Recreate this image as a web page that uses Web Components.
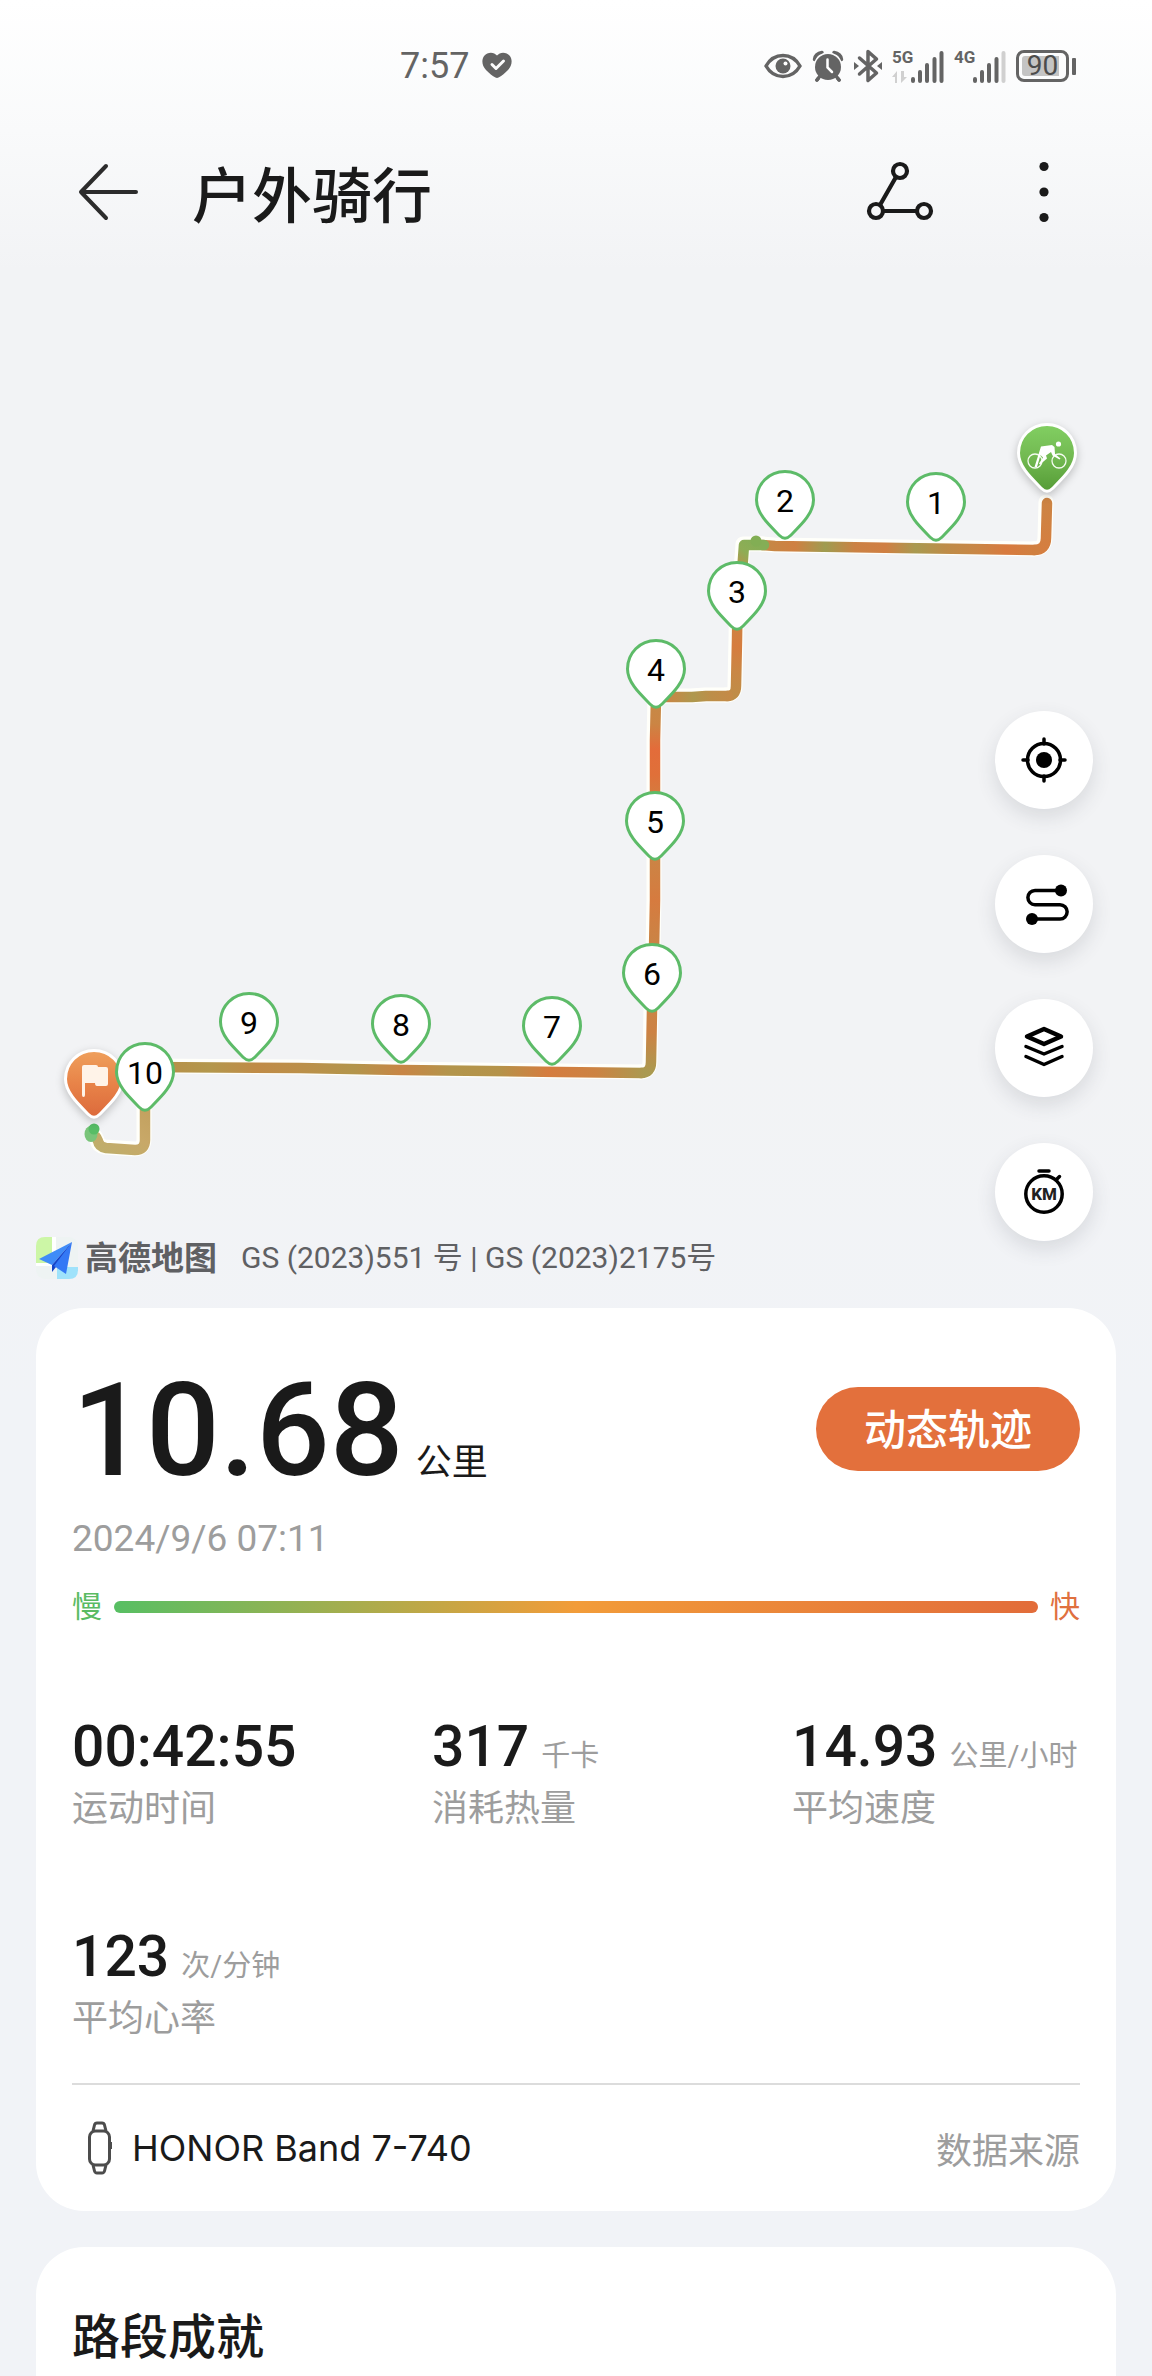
<!DOCTYPE html>
<html lang="zh-CN">
<head>
<meta charset="utf-8">
<meta name="viewport" content="width=device-width, initial-scale=1">
<title>户外骑行</title>
<style>
  html { background: #f1f3f7; }
  body {
    margin: 0;
    font-family: Roboto, "Noto Sans CJK SC", sans-serif;
    color: #1a1a1a;
    background: linear-gradient(#ffffff 0, #f9fafb 130px, #f2f3f5 270px, #f2f3f5 1060px, #f1f3f7 1400px);
  }
</style>
</head>
<body>
<ride-page>
  <status-bar slot="top"></status-bar>
  <title-bar slot="top">户外骑行</title-bar>
  <track-map slot="top">
    <map-pin x="936" y="472">1</map-pin>
    <map-pin x="785" y="470">2</map-pin>
    <map-pin x="737" y="561">3</map-pin>
    <map-pin x="656" y="639">4</map-pin>
    <map-pin x="655" y="791">5</map-pin>
    <map-pin x="652" y="943">6</map-pin>
    <map-pin x="552" y="996">7</map-pin>
    <map-pin x="401" y="994">8</map-pin>
    <map-pin x="249" y="992">9</map-pin>
    <map-pin x="94" y="1049" kind="finish"></map-pin>
    <map-pin x="145" y="1042">10</map-pin>
    <map-pin x="1047" y="423" kind="start"></map-pin>
    <map-tool slot="tools" name="locate" label="定位"></map-tool>
    <map-tool slot="tools" name="route" label="轨迹"></map-tool>
    <map-tool slot="tools" name="layers" label="图层"></map-tool>
    <map-tool slot="tools" name="km" label="公里点"></map-tool>
  </track-map>
  <summary-card>
    <span slot="distance">10.68</span>
    <span slot="unit">公里</span>
    <span slot="action">动态轨迹</span>
    <span slot="date">2024/9/6 07:11</span>
    <stat-item label="运动时间">00:42:55</stat-item>
    <stat-item label="消耗热量" unit="千卡">317</stat-item>
    <stat-item label="平均速度" unit="公里/小时">14.93</stat-item>
    <stat-item label="平均心率" unit="次/分钟">123</stat-item>
    <device-row slot="footer" source="数据来源">HONOR Band 7-740</device-row>
  </summary-card>
  <section-card heading="路段成就"></section-card>
</ride-page>

<script>
const define = (name, render, setup) => customElements.define(name, class extends HTMLElement {
  connectedCallback() {
    if (this.shadowRoot) return;
    this.attachShadow({ mode: 'open' }).innerHTML = render(this);
    if (setup) setup(this);
  }
});

define('ride-page', () => `
  <style>
    :host { display: block; height: 100vh; overflow: hidden; }
    main { display: flex; flex-direction: column; gap: 36px; padding: 0 36px; }
  </style>
  <slot name="top"></slot>
  <main><slot></slot></main>`);

define('status-bar', () => `
  <style>
    :host { display: flex; align-items: center; justify-content: space-between; height: 132px; padding: 0 76px 0 400px; box-sizing: border-box; color: #646464; }
    div { display: flex; align-items: center; }
    .time { gap: 13px; font-size: 36px; line-height: 40px; }
    .icons { gap: 10px; }
    svg { display: block; flex: none; }
    .net { display: flex; align-items: flex-start; }
    .net b { font-size: 17px; line-height: 17px; }
    .net .tag { flex-direction: column; align-items: flex-start; gap: 5px; height: 34px; width: 19px; }
    .bat { gap: 3px; }
    .cell { box-sizing: border-box; width: 53px; height: 32px; border: 3px solid #646464; border-radius: 8px; padding: 3px; }
    .cell span { flex: 1; height: 20px; border-radius: 3px; background: linear-gradient(90deg, #c4c4c4 90%, transparent 90%); font-size: 28px; line-height: 20px; text-align: center; color: #4c4c4c; }
    .tip { width: 4px; height: 17px; border-radius: 1px; background: #646464; }
  </style>
  <div class="time"><span>7:57</span>
    <svg width="30" height="28" viewBox="0 0 30 28"><path fill="currentColor" d="M15 3.600C12-.4 5.500-.2 2.300 3.800-1 8 .2 14 4 18c3 3.200 6.700 6 9.500 7.500 1 .6 2 .6 3 0C19.300 24 23 21.200 26 18c3.800-4 5-10 1.700-14.200C24.500-.2 18-.4 15 3.600z"/><path d="M10 12.500l4 4 7.500-7.500" fill="none" stroke="#fcfcfd" stroke-width="3" stroke-linecap="round" stroke-linejoin="round"/></svg>
  </div>
  <div class="icons">
    <svg width="38" height="26" viewBox="0 0 38 26"><path d="M2 13C10-1 28-1 36 13 28 27 10 27 2 13z" fill="none" stroke="currentColor" stroke-width="3.500" stroke-linejoin="round"/><circle cx="19" cy="13" r="7.500" fill="currentColor"/><circle cx="21.500" cy="10.500" r="2" fill="#fff"/></svg>
    <svg width="32" height="32" viewBox="0 0 32 32"><g fill="none" stroke="currentColor" stroke-linecap="round"><path d="M2.500 9.500C3 5.500 6 3 10 2.500M29.500 9.500C29 5.500 26 3 22 2.500" stroke-width="3.500"/><path d="M8 26l-3 4M24 26l3 4" stroke-width="3.500"/></g><circle cx="16" cy="17" r="14.500" fill="#fcfcfd"/><path d="M8 26l-3 4M24 26l3 4" stroke="currentColor" stroke-width="3.500" stroke-linecap="round"/><circle cx="16" cy="17" r="13" fill="currentColor"/><path d="M15.500 9.500v8l4.500 4.500" fill="none" stroke="#fff" stroke-width="2.500" stroke-linecap="round"/></svg>
    <svg width="28" height="34" viewBox="0 0 28 34"><path d="M5.500 9l17 15-8.500 7.500v-29L22.500 10l-17 15" fill="none" stroke="currentColor" stroke-width="3.500" stroke-linejoin="round" stroke-linecap="round"/><path d="M0 13l5 4-5 4zM28 13l-5 4 5 4z" fill="currentColor"/></svg>
    <div class="net"><div class="tag"><b>5G</b><svg width="16" height="12" viewBox="0 0 16 12"><path d="M5 12V0L0 6h3v6zM9 0v12l6-6h-3V0z" fill="#d0d0d0"/></svg></div>
      <svg width="33" height="34" viewBox="0 0 33 34"><path d="M2 30v2M9 23v9M16 16v16M23.500 10v22M30.500 4v28" stroke="currentColor" stroke-width="4" stroke-linecap="round"/></svg></div>
    <div class="net"><div class="tag"><b>4G</b></div>
      <svg width="33" height="34" viewBox="0 0 33 34"><path d="M2 30v2M9 23v9M16 16v16M23.500 10v22" stroke="currentColor" stroke-width="4" stroke-linecap="round"/><path d="M30.500 4v28" stroke="#d0d0d0" stroke-width="4" stroke-linecap="round"/></svg></div>
    <div class="bat"><div class="cell"><span>90</span></div><div class="tip"></div></div>
  </div>`);

define('title-bar', () => `
  <style>
    :host { display: flex; align-items: center; height: 120px; padding: 0 72px; }
    h1 { flex: 1; margin: 0 0 0 46px; font: 500 60px/80px "Noto Sans CJK SC", sans-serif; }
    button { display: block; padding: 0; border: 0; background: none; color: #1a1a1a; }
    svg { display: block; }
    .more { margin-left: 72px; }
  </style>
  <button aria-label="返回"><svg width="74" height="72" viewBox="0 0 74 72"><path d="M34 10L9 36l25 26M9 36h55" fill="none" stroke="#2c2c2c" stroke-width="4" stroke-linejoin="round" stroke-linecap="round"/></svg></button>
  <h1><slot></slot></h1>
  <button aria-label="轨迹详情"><svg width="72" height="72" viewBox="0 0 72 72"><g fill="none" stroke="currentColor" stroke-width="4.200"><circle cx="36" cy="15" r="7"/><circle cx="12" cy="55" r="7"/><circle cx="60" cy="55" r="7"/><path d="M32 21L16 49M19 55h34"/></g></svg></button>
  <button class="more" aria-label="更多"><svg width="72" height="72" viewBox="0 0 72 72" fill="currentColor"><circle cx="36" cy="10.500" r="4.600"/><circle cx="36" cy="36" r="4.600"/><circle cx="36" cy="61.500" r="4.600"/></svg></button>`);

/* The canvas is 1152 x 1056 units, with its origin 252 units below the page's top. */
const MAP_W = 1152, MAP_H = 1056, MAP_TOP = 252;

const LEGS = [
  { from: [1047, 500], to: [1047, 550], d: 'M1047 503L1046 538Q1046 550 1034 550', stops: ['#cc8444', '#d57e40'] },
  { from: [1036, 550], to: [765, 546], d: 'M1035 550L970 549 900 548 840 547 775 546 762 545', stops: ['#d08040', '#d87a3e', '#c98745', '#be8c48', '#a99a50', '#d07f42', '#cb8144', '#9f9c50', '#cf8042', '#c58846'] },
  { from: [762, 545], to: [743, 570], d: 'M764 545H744L742 572', stops: ['#84ae56', '#8ead55', '#b5944b'] },
  { from: [738, 620], to: [732, 698], d: 'M738 572L737 640 736 686Q736 696 727 696', stops: ['#cc8444', '#d67c3f', '#c98745', '#be8d48'] },
  { from: [730, 696], to: [656, 698], d: 'M728 696L706 696 692 697H656', stops: ['#c48a47', '#bd8e49', '#ae984e', '#c38a47', '#cf8042'] },
  { from: [656, 698], to: [655, 800], d: 'M656 698L655 740 655 800', stops: ['#c58a47', '#cb8544', '#e36c3a', '#e07039', '#d27d40'] },
  { from: [655, 800], to: [652, 950], d: 'M655 800L655 900 654 950', stops: ['#c88646', '#c98646', '#d67b3f', '#c88546'] },
  { from: [652, 950], to: [652, 1073], d: 'M653 950L652 1010 651 1062Q651 1073 641 1073', stops: ['#c98646', '#c98646', '#cd8244', '#aa9a50'] },
  { from: [645, 1073], to: [160, 1067], d: 'M642 1073L560 1072 401 1070 300 1068 145 1067', stops: ['#aa9a50', '#cc8343', '#d57c3f', '#b59349', '#b3954b', '#c88545', '#b3954b', '#bb9049', '#c08b47', '#b3974c', '#b88f48'] },
  { from: [145, 1067], to: [95, 1148], d: 'M145 1067V1140Q145 1150 135 1150L106 1148Q99 1147 98 1141L96 1137', stops: ['#bb9250', '#c2a05e', '#c8a868', '#bfae6b'] }
];

define('track-map', () => {
  const grads = LEGS.map((leg, i) => `<linearGradient id="g${i}" gradientUnits="userSpaceOnUse" x1="${leg.from[0]}" y1="${leg.from[1]}" x2="${leg.to[0]}" y2="${leg.to[1]}">${
    leg.stops.map((c, k) => `<stop offset="${k / (leg.stops.length - 1)}" stop-color="${c}"/>`).join('')}</linearGradient>`).join('');
  const halo = LEGS.map(leg => `<path d="${leg.d}"/>`).join('');
  const line = LEGS.map((leg, i) => `<path d="${leg.d}" stroke="url(#g${i})"/>`).join('');
  return `
  <style>
    :host { display: block; position: relative; aspect-ratio: ${MAP_W} / ${MAP_H}; }
    .route { display: block; width: 100%; height: 100%; }
    .tools { position: absolute; top: 459px; right: 59px; display: flex; flex-direction: column; gap: 46px; }
    .credit { position: absolute; left: 36px; bottom: 28px; display: flex; align-items: center; color: #5f6063; font-size: 30px; line-height: 44px; }
    .credit svg { display: block; margin-right: 7px; }
    .credit b { font: 700 33px/40px "Noto Sans CJK SC", sans-serif; padding-bottom: 4px; margin-right: 24px; }
  </style>
  <svg class="route" viewBox="0 ${MAP_TOP} ${MAP_W} ${MAP_H}" aria-hidden="true">
    <defs>${grads}</defs>
    <g fill="none" stroke-linecap="round" stroke-linejoin="round">
      <g stroke="#fffffa" stroke-width="15" transform="translate(-1 -1)">${halo}</g>
      <g stroke-width="10.500">${line}</g>
    </g>
    <circle cx="756" cy="541" r="5.500" fill="#82ae54"/>
    <ellipse cx="91" cy="1134" rx="6.500" ry="8" fill="#79c47a"/><circle cx="94" cy="1129" r="5.500" fill="#57bd66"/>
  </svg>
  <slot></slot>
  <div class="tools"><slot name="tools"></slot></div>
  <div class="credit">
    <svg width="42" height="42" viewBox="0 0 42 42"><rect width="42" height="42" rx="9" fill="#eef3f3"/><path d="M0 26V9Q0 0 9 0h7v26z" fill="#ccf6a6"/><path d="M21 42V30h21v3q0 9-9 9z" fill="#9fe2fb"/><path d="M16 0h4v25h-4zM0 26h17v3H0z" fill="#fff"/><path d="M36 5L3 22l13 6z" fill="#3f8cf8"/><path d="M36 5L16 28v7l4-5z" fill="#1544c8"/><path d="M36 5L18 29l12 8z" fill="#3478f5"/></svg>
    <b>高德地图</b><span>GS (2023)551 号 | GS (2023)2175号</span>
  </div>`;
});

const PIN = 'M31 1.500C15 1.500 2.500 14 2.500 30c0 13.500 12.500 25 23 35.500 3.500 3.500 7.500 3.500 11 0C47 55 59.500 43.500 59.500 30 59.500 14 47 1.500 31 1.500z';
define('map-pin', el => {
  const kind = el.getAttribute('kind');
  const art = kind === 'start'
    ? '<g fill="none" stroke="#f4fbf0" stroke-width="1.300"><circle cx="19" cy="38" r="7"/><circle cx="43" cy="38" r="7"/></g><path d="M25 23.500l11-1.500 2.500 2 .5 7 5.500 4.500-1 1-7-4-1.500-3.500-5 3.500 1 3-7 6-1-1 4-6-2.500-2.500-3.500 12h-2.500z" fill="#fff"/><circle cx="42.500" cy="21" r="2.600" fill="#fff"/>'
    : kind === 'finish'
      ? '<path d="M19 46V18q0-2 2-2h12q2 0 2 2h8q2 0 2 2v15q0 2-2 2H34q-2 0-2-3H22v12q0 2-1.500 2T19 46z" fill="#fff3e8"/>'
      : '';
  return `
  <style>
    :host { position: absolute; display: flex; justify-content: center; width: 62px; height: 72px; margin-left: -31px; }
    svg { position: absolute; inset: 0; overflow: visible; }
    svg.badge { filter: drop-shadow(0 3px 4px rgba(0,0,0,.22)); }
    span { position: relative; font-size: 32px; line-height: 62px; color: #000; }
  </style>
  <svg width="62" height="72" viewBox="0 0 62 72" class="${kind ? 'badge' : ''}" aria-hidden="true">
    <defs>
      <linearGradient id="start" x1="0" y1="0" x2="0" y2="1"><stop offset="0" stop-color="#82cf62"/><stop offset=".5" stop-color="#72b951"/><stop offset="1" stop-color="#559c36"/></linearGradient>
      <linearGradient id="finish" x1="0" y1="0" x2="0" y2="1"><stop offset="0" stop-color="#efa05c"/><stop offset=".5" stop-color="#e88348"/><stop offset="1" stop-color="#dc6a3c"/></linearGradient>
    </defs>
    <path d="${PIN}" fill="${kind ? `url(#${kind})` : '#fff'}" stroke="${kind ? '#fff' : '#5dbb68'}" stroke-width="3"/>${art}
  </svg>
  <span><slot></slot></span>`;
}, el => {
  el.style.left = `${el.getAttribute('x') / MAP_W * 100}%`;
  el.style.top = `${(el.getAttribute('y') - MAP_TOP) / MAP_H * 100}%`;
});

const TOOLS = {
  locate: '<circle cx="49" cy="49" r="16.500"/><path d="M49 28v5M49 65v5M28 49h5M65 49h5"/><circle cx="49" cy="49" r="8" fill="#000" stroke="none"/>',
  route: '<path d="M66 35.500H40a7 7 0 0 0 0 14.200H65a7 7 0 0 1 0 14.300H37"/><circle cx="66" cy="35.500" r="6" fill="#000" stroke="none"/><circle cx="37" cy="64" r="6" fill="#000" stroke="none"/>',
  layers: '<path d="M49 30L66 37.500 49 45 32 37.500z" stroke-width="4.500"/><path d="M31 47.500L49 55l18-7.500M31 57.500L49 65.500l18-8"/>',
  km: '<circle cx="49" cy="51" r="18.200"/><path d="M44 28h10M62 36l2.500-2.500"/><text x="49" y="57" text-anchor="middle" font-family="Roboto, sans-serif" font-size="17" font-weight="800" fill="#222" stroke="none">KM</text>'
};
define('map-tool', el => `
  <style>
    :host { display: block; }
    button { display: block; width: 98px; height: 98px; padding: 0; border: 0; border-radius: 50%; background: #fff; box-shadow: 0 8px 20px rgba(60,64,80,.14); }
    svg { display: block; }
  </style>
  <button aria-label="${el.getAttribute('label')}"><svg width="98" height="98" viewBox="0 0 98 98" fill="none" stroke="#000" stroke-width="3.500" stroke-linecap="round" stroke-linejoin="round">${TOOLS[el.getAttribute('name')]}</svg></button>`);

define('summary-card', () => `
  <style>
    :host { display: block; background: #fff; border-radius: 48px; padding: 47px 0 0; }
    header, .date, speed-scale, footer { margin-left: 36px; margin-right: 36px; }
    header { display: flex; align-items: center; justify-content: space-between; }
    .distance { display: flex; align-items: baseline; gap: 12px; padding-top: 4px; font-size: 36px; }
    .distance strong { font-size: 130px; line-height: 144px; font-weight: 500; }
    button { height: 84px; padding: 0 48px 4px; border: 0; border-radius: 42px; background: #e3703c; color: #fff; font: 500 42px/56px "Noto Sans CJK SC", sans-serif; }
    .date { margin-top: 12px; font-size: 37px; line-height: 48px; color: #9d9d9d; }
    speed-scale { margin-top: 26px; }
    .stats { display: grid; grid-template-columns: repeat(3, 1fr); row-gap: 94px; margin-top: 90px; }
    footer { margin-top: 42px; border-top: 2px solid #dcdcdc; }
  </style>
  <header>
    <div class="distance"><strong><slot name="distance"></slot></strong><slot name="unit"></slot></div>
    <button><slot name="action"></slot></button>
  </header>
  <div class="date"><slot name="date"></slot></div>
  <speed-scale></speed-scale>
  <div class="stats"><slot></slot></div>
  <footer><slot name="footer"></slot></footer>`);

define('speed-scale', () => `
  <style>
    :host { display: flex; align-items: center; gap: 12px; font-size: 30px; line-height: 36px; }
    .slow { color: #5abb63; } .fast { color: #e0703f; }
    i { flex: 1; height: 12px; border-radius: 6px; background: linear-gradient(90deg, #57bf63, #f29c39 50%, #e26c3a); }
  </style>
  <span class="slow">慢</span><i></i><span class="fast">快</span>`);

define('stat-item', el => `
  <style>
    :host { display: block; padding-left: 36px; white-space: nowrap; color: #9d9d9d; }
    .value { display: flex; align-items: baseline; gap: 12px; height: 64px; font-size: 29px; line-height: 64px; }
    strong { font-size: 57px; font-weight: 500; color: #1a1a1a; }
    .label { font: 36px/52px "Noto Sans CJK SC", sans-serif; }
  </style>
  <div class="value"><strong><slot></slot></strong>${el.hasAttribute('unit') ? `<span>${el.getAttribute('unit')}</span>` : ''}</div>
  <div class="label">${el.getAttribute('label')}</div>`);

define('device-row', el => `
  <style>
    :host { display: flex; align-items: center; height: 126px; }
    svg { display: block; margin: 0 18px 0 14px; }
    .name { flex: 1; font: 36px/48px Inter, sans-serif; }
    a { font: 36px/48px "Noto Sans CJK SC", sans-serif; color: #9d9d9d; text-decoration: none; }
  </style>
  <svg width="28" height="54" viewBox="0 0 28 54" fill="none" stroke="#4c4c4c" stroke-width="3"><rect x="3.500" y="10" width="20" height="34" rx="6"/><path d="M7 10l1.500-6q.5-2 2.500-2h5q2 0 2.500 2L20 10M7 44l1.500 6q.5 2 2.500 2h5q2 0 2.500-2L20 44"/><path d="M25 21v7" stroke-width="2"/></svg>
  <span class="name"><slot></slot></span>
  <a href="#source">${el.getAttribute('source')}</a>`);

define('section-card', el => `
  <style>
    :host { display: block; background: #fff; border-radius: 48px 48px 0 0; padding: 54px 36px 48px; }
    h2 { margin: 0; font: 500 48px/64px "Noto Sans CJK SC", sans-serif; }
  </style>
  <h2>${el.getAttribute('heading')}</h2>`);
</script>
</body>
</html>
